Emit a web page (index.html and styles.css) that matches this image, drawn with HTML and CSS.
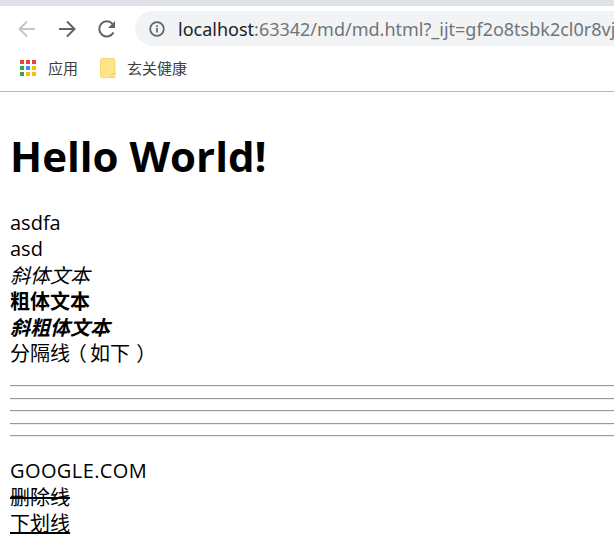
FILE: index.html
```html
<!DOCTYPE html>
<html lang="zh">
<head>
<meta charset="utf-8">
<title>md</title>
<link rel="stylesheet" href="styles.css">
</head>
<body>
<header class="chrome">
  <div class="strip"></div>
  <div class="toolbar">
    <svg class="nav" width="22" height="22" viewBox="0 0 22 22"><path d="M19 11H4M11 3.5 3.5 11l7.5 7.5" fill="none" stroke="#c4c6c9" stroke-width="2"/></svg>
    <svg class="nav" width="22" height="22" viewBox="0 0 22 22"><path d="M3 11h15M11 3.500 18.500 11 11 18.500" fill="none" stroke="#5f6368" stroke-width="2"/></svg>
    <svg class="nav" width="22" height="22" viewBox="0 0 22 22"><path d="M17.500 14.500A7.600 7.600 0 1 1 16.500 5.800" fill="none" stroke="#5f6368" stroke-width="2"/><path d="M19 3v7h-7z" fill="#5f6368"/></svg>
    <div class="omnibox">
      <svg class="info" width="16" height="16" viewBox="0 0 16 16"><circle cx="8" cy="8" r="6.800" fill="none" stroke="#5f6368" stroke-width="1.700"/><path d="M8 7v4.500M8 4.300v1.600" stroke="#5f6368" stroke-width="1.700"/></svg>
      <span class="url"><span class="host">localhost</span>:63342/md/md.html?_ijt=gf2o8tsbk2cl0r8vj</span>
    </div>
  </div>
  <div class="bookmarks">
    <span class="bookmark">
      <svg width="18" height="18" viewBox="0 0 18 18">
        <g fill="#ea4335"><rect x="1" y="1" width="4" height="4"/><rect x="7" y="1" width="4" height="4"/><rect x="13" y="1" width="4" height="4"/></g>
        <rect x="1" y="7" width="4" height="4" fill="#34a853"/><rect x="7" y="7" width="4" height="4" fill="#4285f4"/><rect x="13" y="7" width="4" height="4" fill="#fbbc05"/>
        <rect x="1" y="13" width="4" height="4" fill="#34a853"/><rect x="7" y="13" width="4" height="4" fill="#fbbc05"/><rect x="13" y="13" width="4" height="4" fill="#fbbc05"/>
      </svg>
      <span class="label">应用</span>
    </span>
    <span class="bookmark second">
      <svg width="16" height="20" viewBox="0 0 16 20"><path d="M2 .5h11a2 2 0 0 1 2 2V19.500H2a1.500 1.500 0 0 1-1.500-1.500V2A1.500 1.500 0 0 1 2 .5z" fill="#fee389" stroke="#f5d774"/><path d="M12 19v-3.500h3" fill="none" stroke="#f3c94f"/></svg>
      <span class="label">玄关健康</span>
    </span>
  </div>
</header>
<main class="doc">
  <h1 class="title">Hello World!</h1>
  <p class="para">asdfa<br>asd<br><span class="cjk"><em>斜体文本</em></span><br><span class="cjk"><strong>粗体文本</strong></span><br><span class="cjk"><em><strong>斜粗体文本</strong></em></span><br><span class="cjk">分隔线<span class="paren-open">（</span>如下<span class="paren-close">）</span></span></p>
  <hr class="rule"><hr class="rule"><hr class="rule"><hr class="rule"><hr class="rule">
  <p class="para links"><span class="caps">GOOGLE.COM</span><br><span class="cjk"><del>删除线</del></span><br><span class="cjk"><u>下划线</u></span></p>
</main>
</body>
</html>
```
FILE: styles.css
```css
* { box-sizing: border-box; }
html, body { margin: 0; padding: 0; background: #fff; overflow: hidden; }
body { width: 614px; height: 536px; font-family: "Open Sans", "Noto Sans CJK SC", sans-serif; color: #000; }
.chrome { height: 92px; border-bottom: 1px solid #b6b6b6; overflow: hidden; }
.strip { height: 6px; background: #dee1e6; }
.toolbar { height: 40px; display: flex; align-items: center; padding: 5px 0 0 16px; white-space: nowrap; }
.nav { flex: none; margin-right: 18px; }
.omnibox { flex: none; width: 500px; height: 35px; margin-left: -1px; background: #f1f3f4; border-radius: 18px 0 0 18px; display: flex; align-items: center; padding-left: 14px; overflow: hidden; }
.info { flex: none; margin-right: 13px; }
.url { font-family: "Noto Sans", sans-serif; font-size: 18px; color: #70757a; }
.host { color: #202124; }
.bookmarks { height: 45px; display: flex; align-items: center; padding: 0 0 2px 19px; font-size: 15px; color: #3c4043; }
.bookmark { display: flex; align-items: center; }
.second { margin-left: 22px; }
.label { margin-left: 11px; font-family: "Noto Sans CJK SC", sans-serif; }
.doc { padding: 0 0 0 10px; }
.title { margin: 34px 0 0; font-size: 42px; line-height: 60px; font-weight: 700; }
.para { margin: 24px 0 0; font-size: 20px; line-height: 26px; }
.cjk { line-height: 22px; vertical-align: -1px; }
.paren-open { font-feature-settings: "palt"; margin: 0 4px 0 6px; }
.paren-close { font-feature-settings: "palt"; margin-left: 7px; }
.caps { letter-spacing: .4px; }
.links { margin-top: 21px; }
.rule { display: block; height: 2px; margin: 0 0 10.500px; border: 0; border-top: 1px solid #999; border-bottom: 1px solid #eee; background: none; }
.rule:first-of-type { margin-top: 19px; }
```
